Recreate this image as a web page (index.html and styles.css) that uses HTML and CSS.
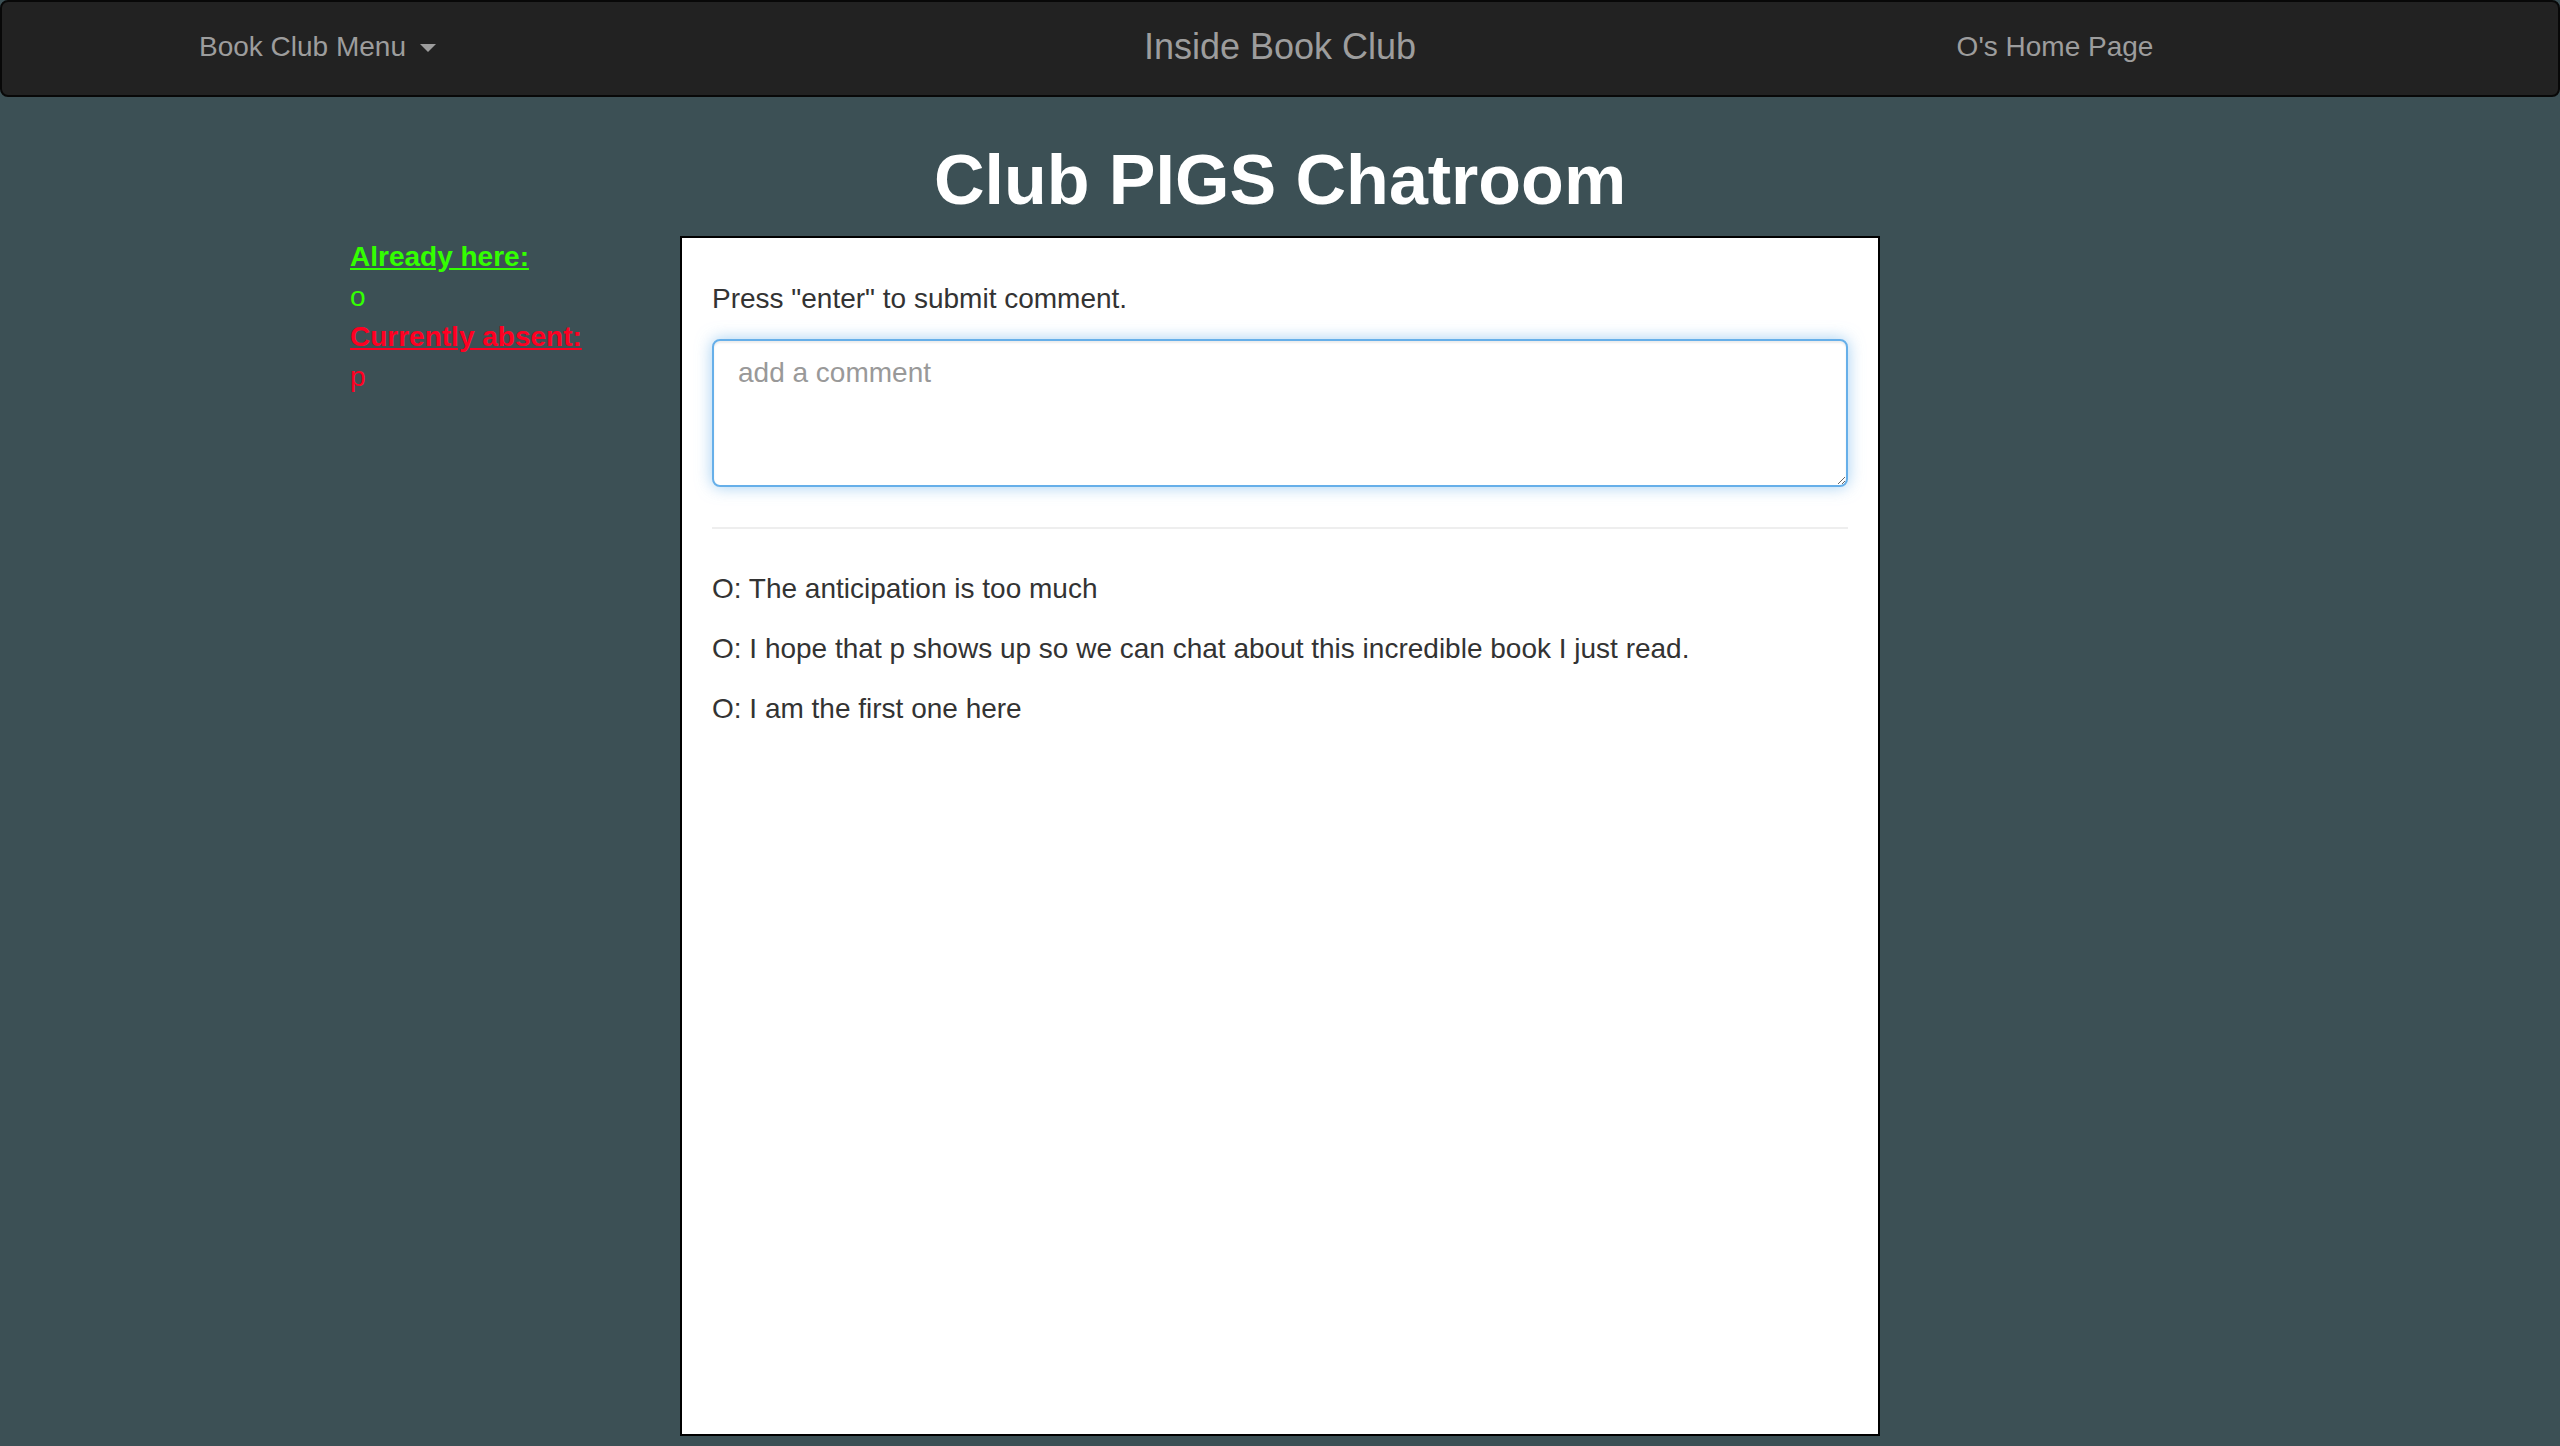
FILE: index.html
```html
<!DOCTYPE html>
<html lang="en">
<head>
<meta charset="utf-8">
<title>Club PIGS Chatroom</title>
<link rel="stylesheet" href="styles.css">
</head>
<body>
<nav class="navbar">
  <div class="nav-left"><span class="nav-link">Book Club Menu</span><span class="caret"></span></div>
  <div class="nav-center">Inside Book Club</div>
  <div class="nav-right"><span class="nav-link">O's Home Page</span></div>
</nav>
<h1 class="title">Club PIGS Chatroom</h1>
<main class="layout">
  <aside class="roster">
    <div class="roster-head present">Already here:</div>
    <div class="roster-name present">o</div>
    <div class="roster-head absent">Currently absent:</div>
    <div class="roster-name absent">p</div>
  </aside>
  <section class="chatbox">
    <p class="hint">Press "enter" to submit comment.</p>
    <textarea class="comment" rows="3" placeholder="add a comment"></textarea>
    <hr class="divider">
    <p class="msg">O: The anticipation is too much</p>
    <p class="msg">O: I hope that p shows up so we can chat about this incredible book I just read.</p>
    <p class="msg">O: I am the first one here</p>
  </section>
  <div class="spacer"></div>
</main>
</body>
</html>
```
FILE: styles.css
```css
html, body {
  margin: 0;
  padding: 0;
}
body {
  background: #3c5055;
  font-family: "Liberation Sans", Arial, Helvetica, sans-serif;
  font-size: 28px;
  line-height: 40px;
  color: #333;
  min-height: 1446px;
}
.navbar {
  box-sizing: border-box;
  height: 97px;
  background: #222;
  border: 2px solid #080808;
  border-radius: 8px;
  display: grid;
  grid-template-columns: 1fr 1fr 1fr;
  align-items: center;
  padding: 0 108px 4px;
  color: #9d9d9d;
}
.nav-left {
  padding-left: 89px;
  display: flex;
  align-items: center;
}
.caret {
  display: inline-block;
  width: 0;
  height: 0;
  margin-left: 14px;
  margin-top: 2px;
  border-top: 8px solid #9d9d9d;
  border-left: 8px solid transparent;
  border-right: 8px solid transparent;
}
.nav-center {
  text-align: center;
  font-size: 36px;
}
.nav-right {
  text-align: center;
  padding-right: 10px;
}
.title {
  margin: 44px 0 16px;
  text-align: center;
  color: #fff;
  font-size: 70px;
  line-height: 79px;
  font-weight: bold;
}
.layout {
  display: grid;
  grid-template-columns: 1fr 1200px 1fr;
}
.roster {
  padding-left: 350px;
  padding-top: 1px;
}
.roster-head {
  font-weight: bold;
  text-decoration: underline;
}
.present {
  color: #33ff00;
}
.absent {
  color: #ff0022;
}
.chatbox {
  box-sizing: border-box;
  height: 1200px;
  background: #fff;
  border: 2px solid #000;
  padding: 41px 30px 0;
}
.hint {
  margin: 0 0 20px;
}
.comment {
  display: block;
  box-sizing: border-box;
  width: 100%;
  height: 148px;
  padding: 12px 24px;
  border: 2px solid #66afe9;
  border-radius: 8px;
  box-shadow: inset 0 2px 2px rgba(0,0,0,.075), 0 0 16px rgba(102,175,233,.6);
  font: inherit;
  line-height: 40px;
  color: #555;
  outline: none;
  resize: vertical;
  background: #fff;
}
.comment::placeholder {
  color: #999;
}
.divider {
  margin: 40px 0;
  border: 0;
  border-top: 2px solid #eee;
  height: 0;
}
.msg {
  margin: 0 0 20px;
}
```
